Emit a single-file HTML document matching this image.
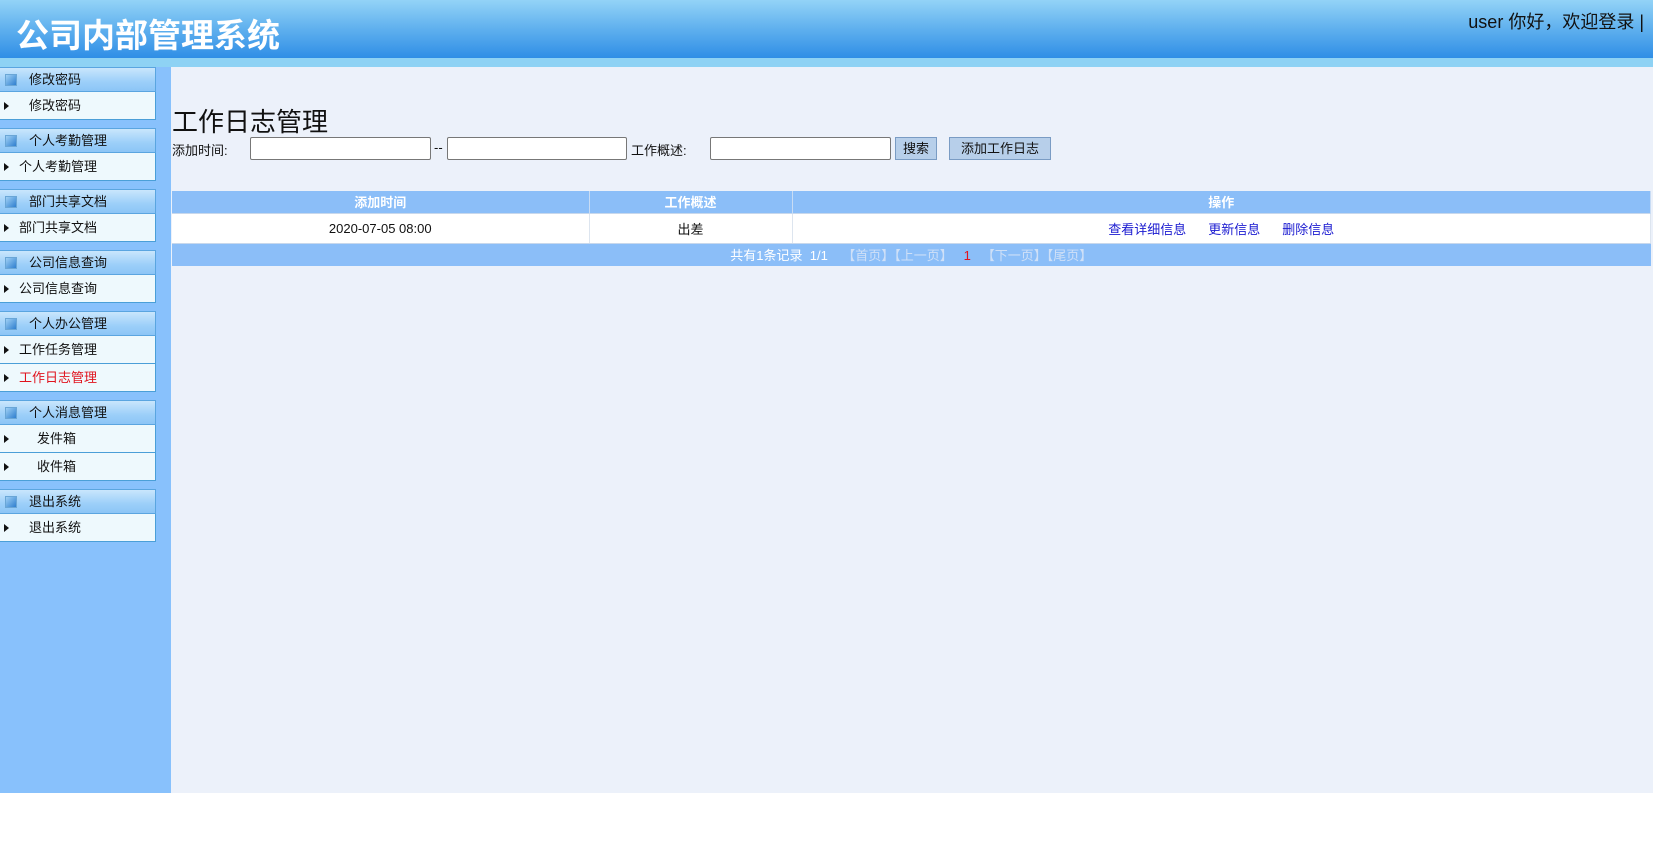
<!DOCTYPE html>
<html><head><meta charset="utf-8">
<style>
*{margin:0;padding:0;box-sizing:border-box}
body{width:1653px;height:859px;background:#fff;font-family:"Liberation Sans","Noto Sans CJK SC",sans-serif;font-size:13px;color:#111;position:relative;overflow:hidden}
#hd{position:absolute;left:0;top:0;width:1653px;height:58px;background:linear-gradient(#93d3f7,#5fb0ee 50%,#2f8ee6)}
#hd h1{position:absolute;left:16px;top:14px;font-size:33px;color:#fff;font-weight:bold;letter-spacing:0px;line-height:44px}
#hd .u{position:absolute;right:9px;top:8px;font-size:18px;color:#111}
#strip{position:absolute;left:0;top:58px;width:1653px;height:9px;background:#8ed2f4}
#side{position:absolute;left:0;top:67px;width:171px;height:726px;background:#88c1fc}
#main{position:absolute;left:171px;top:67px;width:1482px;height:726px;background:#ecf1fa}
.g{position:absolute;left:0;width:156px}
.gh{height:25px;background:linear-gradient(#c9e6fc,#9ccff9 60%,#8cc5f6);border:1px solid #5aa5e0;border-left:none;position:relative;font-size:13px;line-height:23px;padding-left:29px;color:#111}
.gh i{position:absolute;left:5px;top:6px;width:12px;height:12px;background:linear-gradient(135deg,#9fd0f5,#2f7fcf);border:1px solid #6aa6d6}
.it{height:28px;background:#eef9fd;border-bottom:1px solid #4a9fd8;border-right:1px solid #4a9fd8;position:relative;line-height:27px;font-size:13px;color:#111}
.it:before{content:"";position:absolute;left:4px;top:10px;border-left:5px solid #111;border-top:4px solid transparent;border-bottom:4px solid transparent}
.red{color:#e0141e}
#title{position:absolute;left:172px;top:107px;font-size:26px;line-height:30px;color:#111}
.lb{position:absolute;top:140px;font-size:13px}
.in{position:absolute;top:137px;height:23px;background:#fff;border:1px solid #777;border-radius:2px}
.bt{position:absolute;top:137px;height:23px;background:#b7cfea;border:1px solid #7a9cc4;font-size:13px;line-height:21px;text-align:center}
table{position:absolute;left:172px;top:191px;width:1479px;border-collapse:collapse;font-size:13px}
th{background:#8bbef8;color:#fff;height:22px;font-weight:bold;border-right:1px solid #c8dcf4;padding:0}
td{background:#fff;height:30px;text-align:center;border-right:1px solid #dde5ef;border-top:1px solid #c8d8ec;border-bottom:1px solid #c8d8ec}
td a{color:#1a1ad0;text-decoration:none;margin:0 11px}
.pg td{background:#8bbef8;height:23px;color:#fff;border:none}
.pg span{color:#cfe0f7}
</style></head><body>
<div id="hd"><h1>公司内部管理系统</h1><div class="u">user 你好，欢迎登录 |</div></div>
<div id="strip"></div>
<div id="side"></div>
<div id="main"></div>

<div class="g" style="top:67px"><div class="gh"><i></i>修改密码</div><div class="it" style="padding-left:29px">修改密码</div></div>
<div class="g" style="top:128px"><div class="gh"><i></i>个人考勤管理</div><div class="it" style="padding-left:19px">个人考勤管理</div></div>
<div class="g" style="top:189px"><div class="gh"><i></i>部门共享文档</div><div class="it" style="padding-left:19px">部门共享文档</div></div>
<div class="g" style="top:250px"><div class="gh"><i></i>公司信息查询</div><div class="it" style="padding-left:19px">公司信息查询</div></div>
<div class="g" style="top:311px"><div class="gh"><i></i>个人办公管理</div><div class="it" style="padding-left:19px">工作任务管理</div><div class="it red" style="padding-left:19px">工作日志管理</div></div>
<div class="g" style="top:400px"><div class="gh"><i></i>个人消息管理</div><div class="it" style="padding-left:37px">发件箱</div><div class="it" style="padding-left:37px">收件箱</div></div>
<div class="g" style="top:489px"><div class="gh"><i></i>退出系统</div><div class="it" style="padding-left:29px">退出系统</div></div>

<div id="title">工作日志管理</div>
<div class="lb" style="left:172px">添加时间:</div>
<div class="in" style="left:250px;width:181px"></div>
<div class="lb" style="left:434px">--</div>
<div class="in" style="left:447px;width:180px"></div>
<div class="lb" style="left:631px">工作概述:</div>
<div class="in" style="left:710px;width:181px"></div>
<div class="bt" style="left:895px;width:42px">搜索</div>
<div class="bt" style="left:949px;width:102px">添加工作日志</div>

<table>
<tr><th style="width:417px">添加时间</th><th style="width:203px">工作概述</th><th>操作</th></tr>
<tr><td>2020-07-05 08:00</td><td>出差</td><td><a>查看详细信息</a><a>更新信息</a><a>删除信息</a></td></tr>
<tr class="pg"><td colspan="3">共有1条记录&nbsp; 1/1 &nbsp;&nbsp;&nbsp;<span>【首页】【上一页】</span>&nbsp;&nbsp; <b style="color:#e0141e;font-weight:normal">1</b> &nbsp;&nbsp;<span>【下一页】【尾页】</span></td></tr>
</table>
</body></html>
